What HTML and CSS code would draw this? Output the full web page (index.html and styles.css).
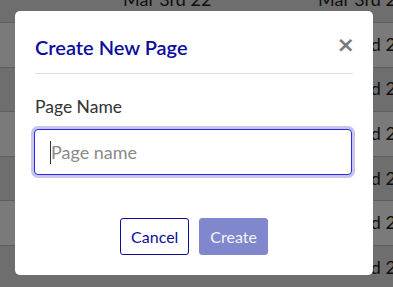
FILE: index.html
```html
<!DOCTYPE html>
<html>
<head>
    <meta name="viewport" content="width=device-width, initial-scale=1.0">
    <title>Pages</title>
    <link rel="stylesheet" href="styles.css">
</head>
<body>
    <div class="page-table">
        <div class="row"><span>Mar 3rd 22</span><span>Mar 3rd 22</span></div>
        <div class="row alt"><span>Mar 3rd 22</span><span>Mar 3rd 22</span></div>
        <div class="row"><span>Mar 3rd 22</span><span>Mar 3rd 22</span></div>
        <div class="row alt"><span>Mar 3rd 22</span><span>Mar 3rd 22</span></div>
        <div class="row"><span>Mar 3rd 22</span><span>Mar 3rd 22</span></div>
        <div class="row alt"><span>Mar 3rd 22</span><span>Mar 3rd 22</span></div>
        <div class="row"><span>Mar 3rd 22</span><span>Mar 3rd 22</span></div>
    </div>

    <div class="backdrop">
        <div class="modal">
            <div class="modal-header">
                <h2>Create New Page</h2>
                <button class="close-btn" aria-label="Close">&times;</button>
            </div>
            <div class="modal-body">
                <label for="pageName">Page Name</label>
                <div class="input-wrap">
                    <input id="pageName" type="text" placeholder="Page name" autofocus>
                    <span class="caret"></span>
                </div>
            </div>
            <div class="modal-footer">
                <button class="btn btn-outline">Cancel</button>
                <button class="btn btn-primary" disabled>Create</button>
            </div>
        </div>
    </div>
</body>
</html>
```

FILE: styles.css
```css
body {
    font-family: 'Lato', 'Liberation Sans', sans-serif;
    margin: 0;
    background: #fff;
    color: #333;
    overflow: hidden;
    height: 287px;
}
.page-table {
    margin-top: -21.6px;
}
.row {
    display: flex;
    align-items: center;
    height: 41.6px;
    padding-bottom: 2px;
    border-bottom: 1px solid #c4c4c4;
    background: #e6e6e6;
    font-size: 18px;
    color: #222;
    white-space: nowrap;
}
.row.alt {
    background: #fff;
}
.row span {
    width: 195px;
    flex-shrink: 0;
}
.row span:first-child {
    margin-left: 123px;
}
.backdrop {
    position: fixed;
    inset: 0;
    background: rgba(0,0,0,0.52);
}
.modal {
    position: absolute;
    left: 15px;
    top: 11px;
    width: 358px;
    height: 264px;
    box-sizing: border-box;
    background: #fff;
    border-radius: 5px;
    padding: 20px;
    display: flex;
    flex-direction: column;
}
.modal-header {
    display: flex;
    align-items: center;
    justify-content: space-between;
    padding-bottom: 14px;
    border-bottom: 1px solid #ddd;
}
.modal-header h2 {
    margin: 4px 0 0;
    font-size: 20px;
    font-weight: 600;
    color: #0d0d9c;
}
.close-btn {
    background: none;
    border: 0;
    padding: 0;
    margin-right: -2px;
    font-family: 'DejaVu Sans', sans-serif;
    font-size: 22px;
    font-weight: bold;
    color: #7a7a7a;
    line-height: 1;
    cursor: pointer;
}
.modal-body {
    padding-top: 22px;
    flex: 1;
}
.modal-body label {
    display: block;
    font-size: 17.5px;
    color: #333;
    margin-bottom: 12px;
}
.input-wrap {
    position: relative;
}
.modal-body input {
    display: block;
    width: 100%;
    height: 46px;
    box-sizing: border-box;
    margin-left: -1px;
    border: 1px solid #2727ee;
    border-radius: 4px;
    box-shadow: 0 0 0 3px #c6c6ec;
    outline: 0;
    padding: 0 16px;
    font-family: 'Lato', 'Liberation Sans', sans-serif;
    font-size: 18px;
    color: #333;
    caret-color: transparent;
}
.modal-body input::placeholder {
    color: #8a8a8a;
}
.caret {
    position: absolute;
    left: 15px;
    top: 12px;
    width: 1px;
    height: 23px;
    background: #333;
}
.modal-footer {
    display: flex;
    justify-content: center;
    gap: 10px;
}
.btn {
    height: 37px;
    padding: 0 10px;
    border-radius: 3px;
    font-family: 'Lato', 'Liberation Sans', sans-serif;
    font-size: 16px;
    cursor: pointer;
}
.btn-outline {
    background: #fff;
    border: 1px solid #0d0d9c;
    color: #0d0d9c;
}
.btn-primary {
    background: #8087cc;
    border: 1px solid #8087cc;
    color: #f4f4fb;
}
```
